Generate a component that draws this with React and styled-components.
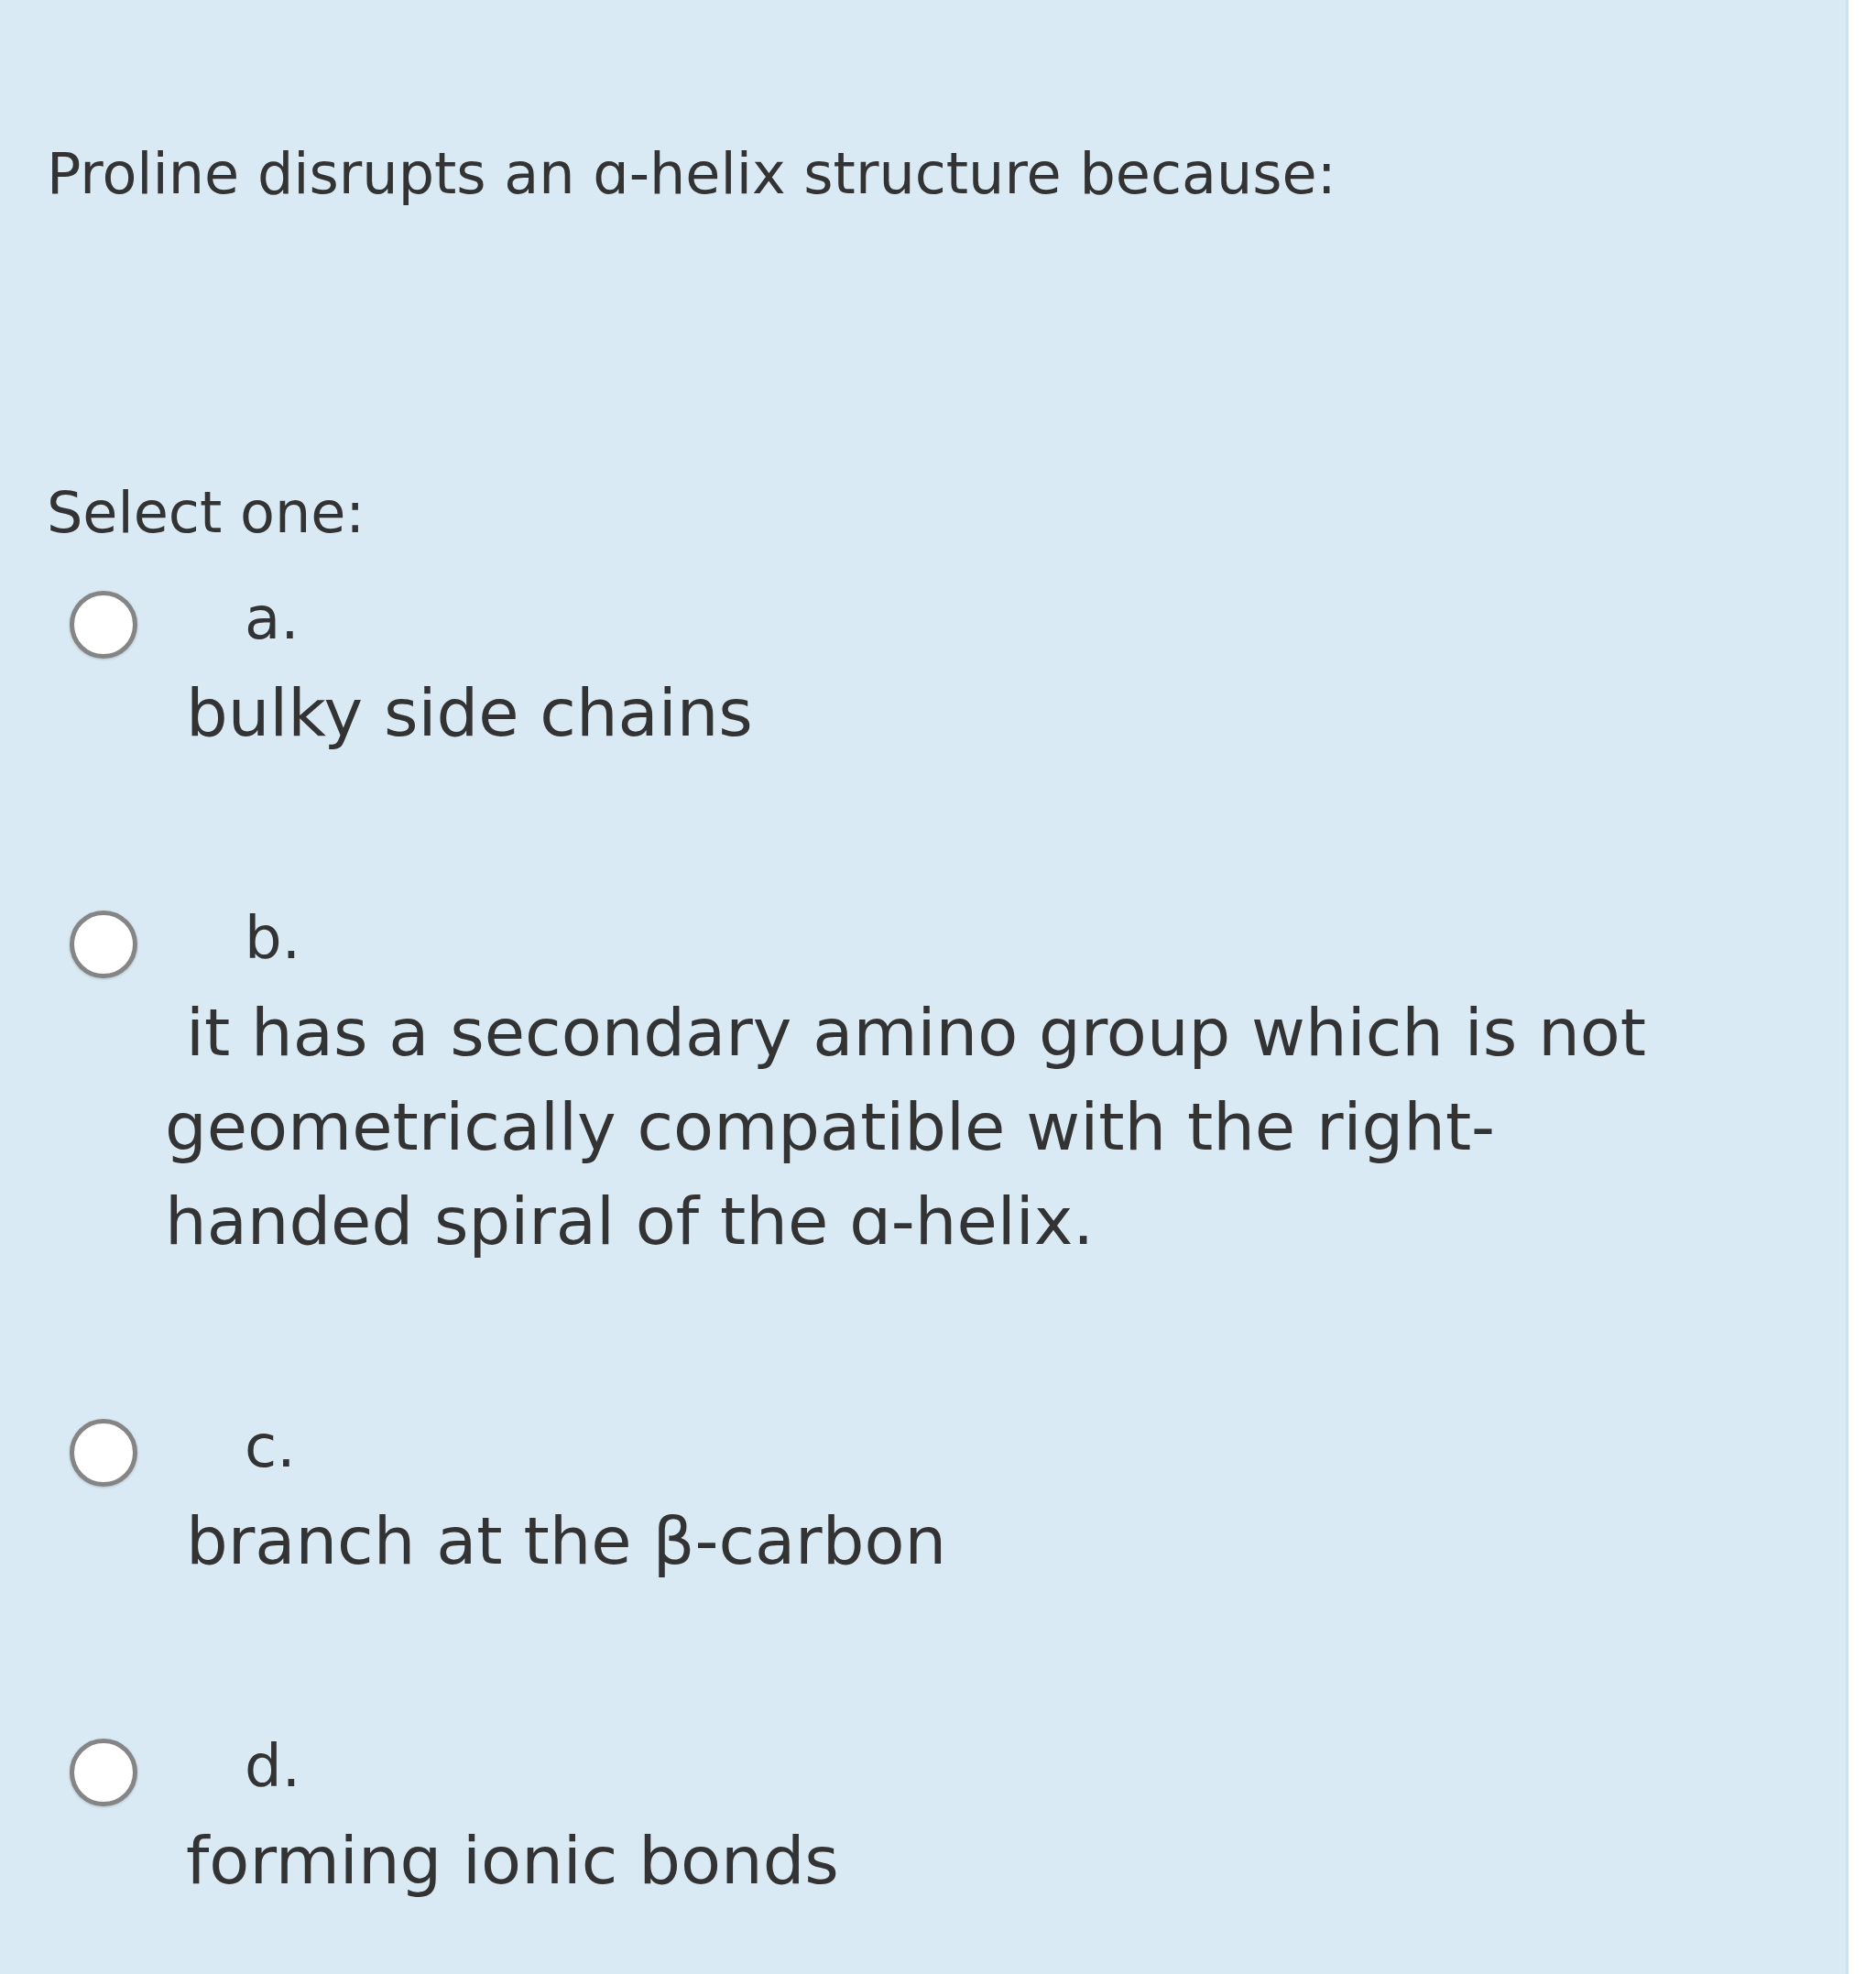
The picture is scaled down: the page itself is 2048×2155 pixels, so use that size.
import React from 'react'
import styled, { createGlobalStyle } from 'styled-components'

const GlobalStyle = createGlobalStyle`
  html, body {
    margin: 0;
    padding: 0;
    background: #ffffff;
  }
  * { box-sizing: border-box; }
`

const Panel = styled.div`
  width: 2018px;
  min-height: 100vh;
  background-color: #d9eaf5;
  border-right: 3px solid #c3e6f0;
  padding: 147px 0 40px 51px;
  font-family: "DejaVu Sans", Verdana, sans-serif;
  color: #333333;
`

const Question = styled.div`
  font-size: 62px;
  line-height: 85px;
`

const Prompt = styled.div`
  margin-top: 285px;
  font-size: 62px;
  line-height: 85px;
`

const Answers = styled.div`
  display: flex;
  flex-direction: column;
  gap: 164px;
  margin-top: 43px;
`

const Option = styled.div`
  display: flex;
  flex-direction: column;
`

const Row = styled.label`
  display: flex;
  align-items: center;
  height: 74px;
`

const Radio = styled.span`
  width: 74px;
  height: 74px;
  margin-left: 25px;
  border-radius: 50%;
  background: #ffffff;
  border: 5px solid #858585;
  box-shadow: 0 1px 3px rgba(0, 0, 0, 0.18);
  flex-shrink: 0;
`

const Letter = styled.span`
  margin-left: 117px;
  margin-bottom: 14px;
  font-size: 64px;
  line-height: 74px;
`

const AnswerText = styled.div`
  margin-top: 8px;
  margin-left: 129px;
  width: 1700px;
  font-size: 72px;
  line-height: 103px;
  text-indent: 23px;
`

const options = [
  { letter: 'a.', text: 'bulky side chains' },
  {
    letter: 'b.',
    text: 'it has a secondary amino group which is not geometrically compatible with the right-handed spiral of the \u0251-helix.',
  },
  { letter: 'c.', text: 'branch at the \u03b2-carbon' },
  { letter: 'd.', text: 'forming ionic bonds' },
]

const App = () => {
  return (
    <>
      <GlobalStyle />
      <Panel>
        <Question>Proline disrupts an {'\u0251'}-helix structure because:</Question>
        <Prompt>Select one:</Prompt>
        <Answers>
          {options.map((o) => (
            <Option key={o.letter}>
              <Row>
                <Radio />
                <Letter>{o.letter}</Letter>
              </Row>
              <AnswerText>{o.text}</AnswerText>
            </Option>
          ))}
        </Answers>
      </Panel>
    </>
  )
}

export default App
